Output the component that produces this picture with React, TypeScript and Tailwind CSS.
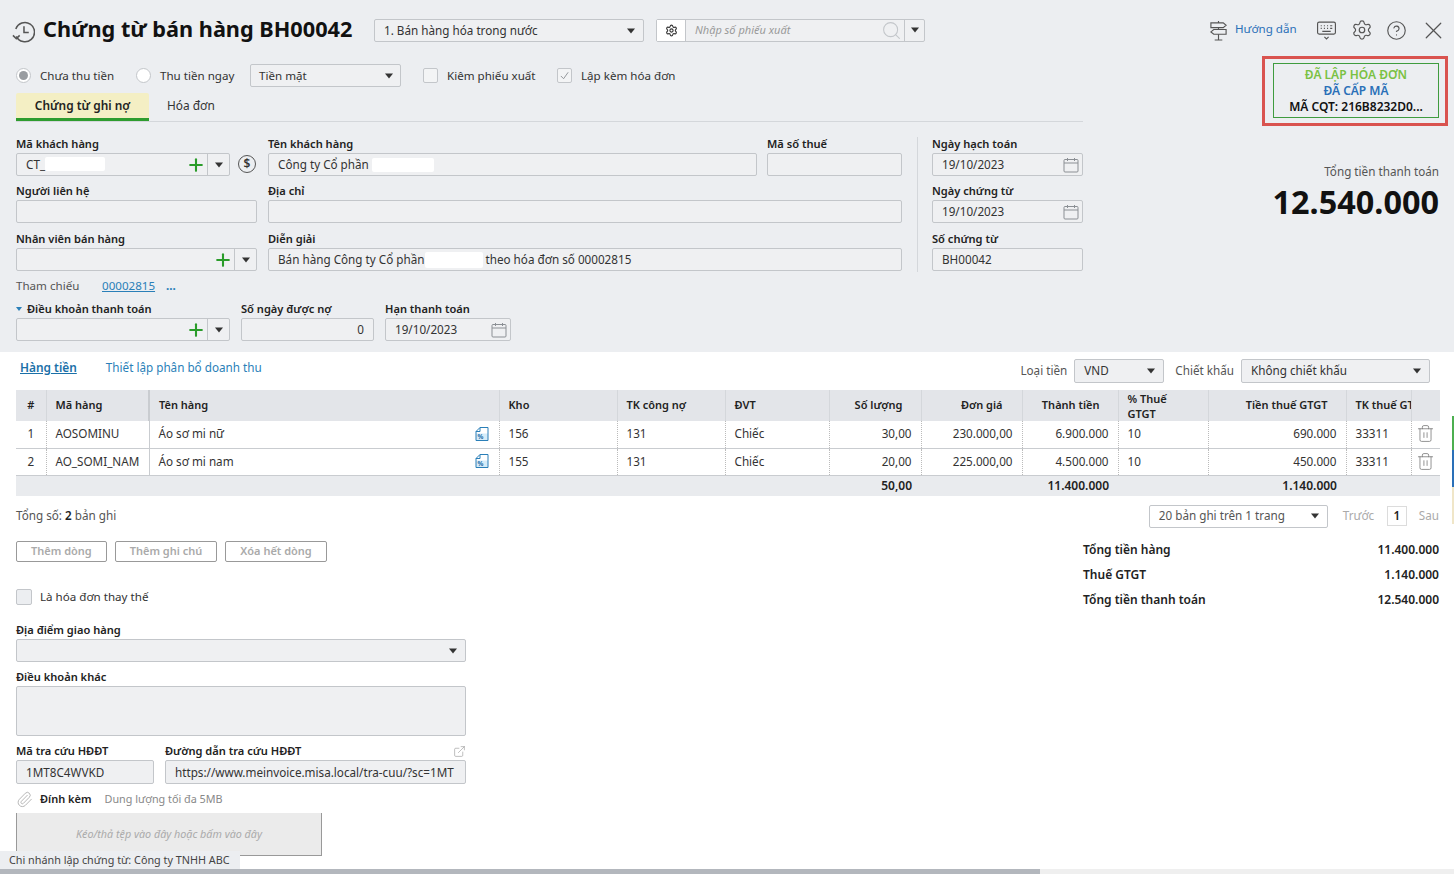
import { ExternalLink, Paperclip, Plus, Settings, X, CircleHelp, Search, Trash2 } from 'lucide-react';

const Caret = ({ className = '' }: { className?: string }) => (
  <svg viewBox="0 0 8 6" className={`w-2 h-1.5 fill-[#333] ${className}`}>
    <path d="M0 0.5h8L4 5.5z" />
  </svg>
);

const Calendar = () => (
  <svg viewBox="0 0 16 16" className="w-4 h-4 fill-none stroke-[#8b8f94]">
    <rect x="1" y="2.5" width="14" height="12.5" rx="1" />
    <path d="M1 6h14M4.5 1v3M11.5 1v3" />
  </svg>
);

function Label({ children }: { children: React.ReactNode }) {
  return <div className="h-[16px] pb-[2px] flex items-center text-[11.1px] font-semibold leading-[14px] text-[#222]">{children}</div>;
}

function Box({ children, className = '' }: { children?: React.ReactNode; className?: string }) {
  return (
    <div className={`h-[23px] flex items-center border border-[#c3c6ca] rounded-[2px] bg-[#eff0f2] text-[11.7px] text-[#333] ${className}`}>
      {children}
    </div>
  );
}

function Lookup({ value, hidden }: { value?: string; hidden?: boolean }) {
  return (
    <Box>
      <span className="pl-[9px] flex-1 flex items-center">
        {value}
        {hidden && <span className="w-[60px] h-[14px] bg-white rounded-[2px]" />}
      </span>
      <Plus className="w-[20px] h-[20px] text-[#2a9c2a] mr-[1px]" strokeWidth={2.5} />
      <span className="w-[22px] h-full border-l border-[#c3c6ca] flex items-center justify-center">
        <Caret />
      </span>
    </Box>
  );
}

function DateBox({ value }: { value: string }) {
  return (
    <Box className="pl-[9px] pr-[3px] justify-between">
      {value}
      <Calendar />
    </Box>
  );
}

function Field({ label, className = '', children }: { label: React.ReactNode; className?: string; children?: React.ReactNode }) {
  return (
    <div className={className}>
      <Label>{label}</Label>
      {children ?? <Box />}
    </div>
  );
}

const RowIcon = () => (
  <svg viewBox="0 0 14 14" className="w-[14px] h-[14px] fill-none stroke-[#2a7fb8]">
    <path d="M1 6.5h12v7H1z" fill="#d5ebf8" stroke="none" />
    <path d="M5 .5h8v13H1V4.5z M5 .5v4H1" />
    <text x="2.4" y="11.8" fontSize="6.5" fontWeight="700" fill="#1f6ea8" stroke="none">%</text>
  </svg>
);

const rows = [
  { no: 1, code: 'AOSOMINU', name: 'Áo sơ mi nữ', kho: '156', qty: '30,00', price: '230.000,00', amount: '6.900.000', tax: '690.000' },
  { no: 2, code: 'AO_SOMI_NAM', name: 'Áo sơ mi nam', kho: '155', qty: '20,00', price: '225.000,00', amount: '4.500.000', tax: '450.000' },
];

const th = 'px-[9px] text-[11px] font-semibold text-[#222] text-left border-r border-[#d4d7db]';
const td = 'px-[9px] text-[11.7px] text-[#333] border-r border-dotted border-[#bbb]';

export default function App() {
  return (
    <div className="relative w-[1454px] h-[874px] overflow-hidden bg-white font-['Noto_Sans',sans-serif] text-[#333]">
      <div className="h-[352px] bg-[#eceef1]">
        {/* title bar */}
        <div className="h-[60px] flex items-center pl-[12px] pr-[6px]">
          <svg viewBox="0 0 24 24" className="w-[23px] h-[23px] fill-none stroke-[#555] stroke-[1.6] mt-[2px]">
            <path d="M4.5 17A10 10 0 1 0 4 9.5" />
            <path d="M12.5 6.5V13h5" />
            <path d="M1 16l3.5 3.5L8 16" />
          </svg>
          <h1 className="ml-[8px] w-[331px] pb-[2px] text-[21.7px] font-bold leading-none text-[#111] whitespace-nowrap">Chứng từ bán hàng BH00042</h1>
          <div className="w-[270px] h-[23px] flex items-center justify-between pl-[9px] pr-[8px] pt-[1px] border border-[#c3c6ca] rounded-[2px] bg-[#eff0f2] text-[11.7px]">
            1. Bán hàng hóa trong nước
            <Caret />
          </div>
          <div className="ml-[12px] w-[269px] h-[23px] flex items-center border border-[#c3c6ca] rounded-[2px] bg-[#eff0f2]">
            <span className="w-[29px] h-full flex items-center justify-center bg-white border-r border-[#c3c6ca]">
              <Settings className="w-[13px] h-[13px]" />
            </span>
            <span className="flex-1 pl-[9px] pt-[1px] text-[11px] italic text-[#999]">Nhập số phiếu xuất</span>
            <Search className="w-[21px] h-[21px] text-[#c3c6ca] mr-[2px]" strokeWidth={1.2} />
            <span className="w-[20px] h-full flex items-center justify-center border-l border-[#c3c6ca]">
              <Caret />
            </span>
          </div>
          <div className="ml-auto flex items-center">
            <svg viewBox="0 0 20 22" className="w-[19px] h-[21px] fill-none stroke-[#555] stroke-[1.2]">
              <path d="M10 1v20M6 21h8" />
              <path d="M2 3h13l3 2.5-3 2.5H2z" fill="#eceef1" />
              <path d="M18 10H5l-3 2.5L5 15h13z" fill="#eceef1" />
            </svg>
            <span className="ml-[7px] mb-[2px] w-[62px] text-[11.6px] text-[#2a70b8] whitespace-nowrap">Hướng dẫn</span>
            <svg viewBox="0 0 20 20" className="ml-[19px] w-[21px] h-[21px] fill-none stroke-[#555] stroke-[1.1]">
              <rect x="1.5" y="2" width="17" height="11.5" rx="1.5" />
              <path d="M4.5 5.5h1M7.5 5.5h1M10.5 5.5h1M13.5 5.5h2M4.5 8h1M7.5 8h1M10.5 8h1M13.5 8h2M6 10.8h8M8 16l2 2 2-2" />
            </svg>
            <Settings className="ml-[14px] w-[22px] h-[22px] text-[#555]" strokeWidth={1.3} />
            <CircleHelp className="ml-[13px] w-[21px] h-[21px] text-[#555]" strokeWidth={1.3} />
            <X className="ml-[12px] w-[29px] h-[29px] text-[#555]" strokeWidth={1} />
          </div>
        </div>

        <div className="flex">
          <div className="w-[1083px] pl-[16px] shrink-0">
            {/* payment options */}
            <div className="h-[31px] flex items-center text-[11.6px]">
              <span className="w-[15px] h-[15px] rounded-full border border-[#c3c6ca] bg-white flex items-center justify-center">
                <span className="w-[9px] h-[9px] rounded-full bg-[#9a9da1]" />
              </span>
              <span className="ml-[9px] w-[74px] whitespace-nowrap">Chưa thu tiền</span>
              <span className="ml-[22px] w-[15px] h-[15px] rounded-full border border-[#c3c6ca] bg-white" />
              <span className="ml-[9px] w-[75px] whitespace-nowrap">Thu tiền ngay</span>
              <div className="ml-[15px] w-[151px] h-[23px] flex items-center justify-between pl-[8px] pr-[7px] border border-[#c3c6ca] rounded-[2px] bg-[#eff0f2]">
                Tiền mặt
                <Caret />
              </div>
              <span className="ml-[22px] w-[15px] h-[15px] rounded-[2px] border border-[#c3c6ca] bg-[#f3f4f5]" />
              <span className="ml-[9px] w-[89px] whitespace-nowrap">Kiêm phiếu xuất</span>
              <span className="ml-[21px] w-[15px] h-[15px] rounded-[2px] border border-[#c3c6ca] bg-[#f3f4f5] flex items-center justify-center">
                <svg viewBox="0 0 12 12" className="w-[11px] h-[11px] fill-none stroke-[#8b8f94]"><path d="M2 6.5l3 3 5-7" /></svg>
              </span>
              <span className="ml-[9px]">Lập kèm hóa đơn</span>
            </div>

            {/* tabs */}
            <div className="h-[31px] pt-[2px] flex border-b border-[#d4d7db] text-[11.9px]">
              <div className="w-[133px] h-[28px] flex items-center justify-center bg-[#f4efc4] border-b-[3px] border-[#2e9c2e] font-semibold text-[#222] rounded-t-[2px]">Chứng từ ghi nợ</div>
              <div className="ml-[18px] h-[25px] flex items-center">Hóa đơn</div>
            </div>

            {/* form */}
            <div className="mt-[15px] flex">
              <div className="w-[886px]">
                <div className="flex">
                  <Field label="Mã khách hàng" className="w-[214px]"><Lookup value="CT_" hidden /></Field>
                  <div className="w-[38px] flex items-end pl-[8px] pb-[3px]">
                    <span className="w-[18px] h-[18px] rounded-full border-[1.5px] border-[#555] text-[12px] font-semibold leading-none flex items-center justify-center">$</span>
                  </div>
                  <Field label="Tên khách hàng" className="w-[489px]">
                    <Box className="pl-[9px]">Công ty Cổ phần<span className="ml-[3px] w-[62px] h-[14px] bg-white rounded-[2px]" /></Box>
                  </Field>
                  <Field label="Mã số thuế" className="ml-[10px] w-[135px]" />
                </div>
                <div className="mt-[8px] flex">
                  <Field label="Người liên hệ" className="w-[241px]" />
                  <Field label="Địa chỉ" className="ml-[11px] w-[634px]" />
                </div>
                <div className="mt-[9px] flex">
                  <Field label="Nhân viên bán hàng" className="w-[241px]"><Lookup /></Field>
                  <Field label="Diễn giải" className="ml-[11px] w-[634px]">
                    <Box className="pl-[9px]">
                      Bán hàng Công ty Cổ phần
                      <span className="ml-[1px] mr-[2px] w-[58px] h-[16px] bg-white rounded-[2px]" />
                      theo hóa đơn số 00002815
                    </Box>
                  </Field>
                </div>
                <div className="h-[31px] pb-[1px] flex items-center text-[11.6px]">
                  <span className="w-[64px] text-[#555] whitespace-nowrap">Tham chiếu</span>
                  <span className="ml-[22px] text-[#2a7fb8] underline">00002815</span>
                  <span className="ml-[11px] text-[#2a7fb8] font-bold leading-none">...</span>
                </div>
                <div className="flex">
                  <Field
                    label={
                      <>
                        <svg viewBox="0 0 6 4" className="w-[6px] h-[4px] mr-[5px] fill-[#2a7fb8]"><path d="M0 0h6L3 4z" /></svg>
                        Điều khoản thanh toán
                      </>
                    }
                    className="w-[214px]"
                  >
                    <Lookup />
                  </Field>
                  <Field label="Số ngày được nợ" className="ml-[11px] w-[133px]">
                    <Box className="justify-end pr-[9px]">0</Box>
                  </Field>
                  <Field label="Hạn thanh toán" className="ml-[11px] w-[126px]">
                    <DateBox value="19/10/2023" />
                  </Field>
                </div>
              </div>
              <div className="ml-[15px] pl-[14px] w-[166px] border-l border-[#d4d7db] h-[135px]">
                <Field label="Ngày hạch toán"><DateBox value="19/10/2023" /></Field>
                <Field label="Ngày chứng từ" className="mt-[8px]"><DateBox value="19/10/2023" /></Field>
                <Field label="Số chứng từ" className="mt-[9px]"><Box className="pl-[9px]">BH00042</Box></Field>
              </div>
            </div>
          </div>

          {/* status */}
          <div className="flex-1 pl-[179px] pr-[6px] -mt-[4px]">
            <div className="w-[186px] h-[70px] border-[3px] border-[#d9534f] pt-[4px] pl-[8px] pr-[6px]">
              <div className="h-[55px] border border-[#3f9c3f] flex flex-col items-center justify-center text-[12px] font-semibold leading-[16px]">
                <span className="text-[#7ac143]">ĐÃ LẬP HÓA ĐƠN</span>
                <span className="text-[#2a70b8]">ĐÃ CẤP MÃ</span>
                <span className="text-[#111]">MÃ CQT: 216B8232D0...</span>
              </div>
            </div>
            <div className="mt-[37px] pr-[9px] text-right">
              <div className="text-[11.7px] text-[#555]">Tổng tiền thanh toán</div>
              <div className="text-[32.4px] font-bold leading-[40px] text-[#111]">12.540.000</div>
            </div>
          </div>
        </div>
      </div>

      {/* lines section */}
      <div className="px-[16px]">
        <div className="h-[38px] flex items-center text-[11.7px] pr-[8px]">
          <span className="ml-[4px] mb-[6px] text-[11.9px] font-semibold text-[#1a70a8] underline">Hàng tiền</span>
          <span className="ml-[29px] mb-[6px] text-[#2a7fb8]">Thiết lập phân bổ doanh thu</span>
          <span className="ml-auto text-[#555]">Loại tiền</span>
          <div className="ml-[7px] w-[90px] h-[24px] flex items-center justify-between pl-[9px] pr-[8px] border border-[#c3c6ca] rounded-[2px] bg-[#eff0f2]">VND<Caret /></div>
          <span className="ml-[11px] text-[#555]">Chiết khấu</span>
          <div className="ml-[7px] w-[189px] h-[24px] flex items-center justify-between pl-[9px] pr-[8px] border border-[#c3c6ca] rounded-[2px] bg-[#eff0f2]">Không chiết khấu<Caret /></div>
        </div>

        <table className="w-[1424px] table-fixed border-collapse">
          <colgroup>
            {[30, 103, 350, 118, 108, 104, 92, 101, 96, 90, 138, 65, 29].map((w, i) => <col key={i} style={{ width: w }} />)}
          </colgroup>
          <thead>
            <tr className="h-[31px] bg-[#e3e5e9]">
              <th className={`${th} !text-center`}>#</th>
              <th className={`${th} border-r-2 border-r-[#c9ccd0]`}>Mã hàng</th>
              <th className={th}>Tên hàng</th>
              <th className={th}>Kho</th>
              <th className={th}>TK công nợ</th>
              <th className={th}>ĐVT</th>
              <th className={`${th} !text-right !pr-[18px]`}>Số lượng</th>
              <th className={`${th} !text-right !pr-[19px]`}>Đơn giá</th>
              <th className={`${th} !text-right !pr-[18px]`}>Thành tiền</th>
              <th className={`${th} leading-[15px]`}>% Thuế<br />GTGT</th>
              <th className={`${th} !text-right !pr-[18px]`}>Tiền thuế GTGT</th>
              <th className={`${th} whitespace-nowrap overflow-hidden !pr-0`}>TK thuế GTGT</th>
              <th />
            </tr>
          </thead>
          <tbody>
            {rows.map((r) => (
              <tr key={r.no} className="h-[27px] border-b border-[#c9ccd0]">
                <td className={`${td} text-center`}>{r.no}</td>
                <td className={`${td} !border-solid !border-[#c9ccd0]`}>{r.code}</td>
                <td className={td}>
                  <div className="flex items-center justify-between pr-[1px]">{r.name}<RowIcon /></div>
                </td>
                <td className={td}>{r.kho}</td>
                <td className={td}>131</td>
                <td className={td}>Chiếc</td>
                <td className={`${td} text-right`}>{r.qty}</td>
                <td className={`${td} text-right`}>{r.price}</td>
                <td className={`${td} text-right`}>{r.amount}</td>
                <td className={td}>10</td>
                <td className={`${td} text-right`}>{r.tax}</td>
                <td className={td}>33311</td>
                <td>
                  <Trash2 className="mx-auto mb-[1px] w-[19px] h-[19px] text-[#777]" strokeWidth={1} />
                </td>
              </tr>
            ))}
            <tr className="h-[21px] bg-[#e9ebee] text-[12px] font-semibold text-[#222]">
              <td colSpan={6} />
              <td className="px-[9px] pt-[1px] text-right">50,00</td>
              <td />
              <td className="px-[9px] pt-[1px] text-right">11.400.000</td>
              <td />
              <td className="px-[9px] pt-[1px] text-right">1.140.000</td>
              <td colSpan={2} />
            </tr>
          </tbody>
        </table>

        <div className="h-[40px] flex items-center text-[11.7px] text-[#555]">
          <span>Tổng số: <b className="text-[#222] font-semibold">2</b> bản ghi</span>
          <div className="ml-auto w-[179px] h-[23px] flex items-center justify-between pl-[9px] pr-[8px] border border-[#c3c6ca] rounded-[2px]">20 bản ghi trên 1 trang<Caret /></div>
          <span className="ml-[15px] w-[31px] text-[#aaa] whitespace-nowrap">Trước</span>
          <span className="ml-[13px] w-[20px] h-[20px] border border-[#dcdcdc] flex items-center justify-center font-semibold text-[#222]">1</span>
          <span className="ml-[12px] -mr-[1px] text-[#aaa]">Sau</span>
        </div>

        <div className="flex">
          <div className="w-[450px] pt-[5px]">
            <div className="flex gap-[8px]">
              {['Thêm dòng', 'Thêm ghi chú', 'Xóa hết dòng'].map((t) => (
                <button key={t} className="h-[21px] px-[14px] border border-[#999] rounded-[2px] text-[11px] font-semibold text-[#aaa]">{t}</button>
              ))}
            </div>
            <div className="mt-[26px] flex items-center text-[11.6px]">
              <span className="w-[16px] h-[16px] rounded-[2px] border border-[#c3c6ca] bg-[#eceef1]" />
              <span className="ml-[8px]">Là hóa đơn thay thế</span>
            </div>
            <Field label="Địa điểm giao hàng" className="mt-[18px]">
              <Box className="justify-end pr-[8px]"><Caret /></Box>
            </Field>
            <Field label="Điều khoản khác" className="mt-[8px]">
              <Box className="!h-[50px]" />
            </Field>
            <div className="mt-[8px] flex">
              <Field label="Mã tra cứu HĐĐT" className="w-[138px]">
                <Box className="!h-[24px] pl-[9px]">1MT8C4WVKD</Box>
              </Field>
              <div className="ml-[11px] w-[301px]">
                <div className="h-[16px] pb-[2px] flex items-center justify-between text-[11.1px] font-semibold text-[#222]">
                  Đường dẫn tra cứu HĐĐT
                  <ExternalLink className="w-[13px] h-[13px] text-[#888]" strokeWidth={1} />
                </div>
                <Box className="!h-[24px] pl-[9px] whitespace-nowrap overflow-hidden">https://www.meinvoice.misa.local/tra-cuu/?sc=1MT</Box>
              </div>
            </div>
            <div className="mt-[1px] h-[28px] flex items-center text-[11px]">
              <Paperclip className="w-[17px] h-[17px] text-[#aaa]" strokeWidth={1.2} />
              <span className="ml-[7px] font-semibold text-[#222]">Đính kèm</span>
              <span className="ml-[13px] text-[10.8px] text-[#888]">Dung lượng tối đa 5MB</span>
            </div>
            <div className="w-[306px] h-[43px] flex items-center justify-center bg-[#ebebeb] border border-t-0 border-[#999] text-[10.75px] italic text-[#aaa]">
              Kéo/thả tệp vào đây hoặc bấm vào đây
            </div>
          </div>
          <div className="ml-auto -mr-[1px] mt-[1px] w-[356px] text-[12px] font-semibold text-[#222]">
            {[['Tổng tiền hàng', '11.400.000'], ['Thuế GTGT', '1.140.000'], ['Tổng tiền thanh toán', '12.540.000']].map(([k, v]) => (
              <div key={k} className="h-[25px] flex items-center justify-between">
                <span>{k}</span>
                <span>{v}</span>
              </div>
            ))}
          </div>
        </div>
      </div>

      {/* branch note */}
      <div className="absolute left-0 bottom-[5px] w-[240px] h-[18px] pl-[9px] flex items-center bg-[#eceef1] text-[10.8px] text-[#444]">
        Chi nhánh lập chứng từ: Công ty TNHH ABC
      </div>
      {/* horizontal scrollbar */}
      <div className="absolute left-0 right-0 bottom-0 h-[5px] bg-[#efefef]">
        <div className="w-[1040px] h-full bg-[#b3b7bd]" />
      </div>
      {/* right edge tabs */}
      <div className="absolute right-0 top-[416px] w-[2px] flex flex-col">
        <span className="h-[34px] bg-[#4caf50]" />
        <span className="h-[37px] bg-[#2a70b8]" />
        <span className="h-[37px] bg-[#f0e6c8]" />
      </div>
    </div>
  );
}
